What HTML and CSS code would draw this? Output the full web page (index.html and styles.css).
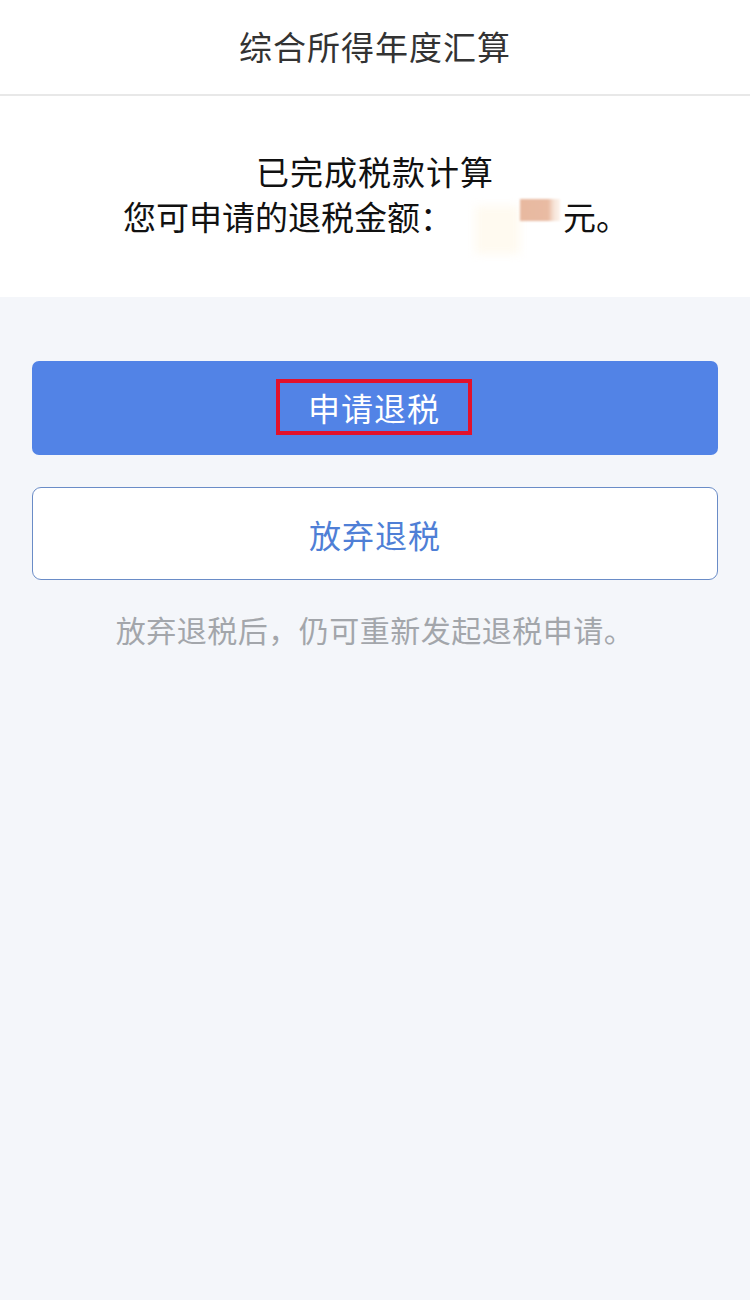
FILE: index.html
```html
<!DOCTYPE html>
<html lang="zh-CN">
<head>
<meta charset="utf-8">
<title>综合所得年度汇算</title>
<link rel="stylesheet" href="styles.css">
</head>
<body>
<div class="page">
  <header class="topbar">
    <h1 class="title">综合所得年度汇算</h1>
  </header>
  <section class="result">
    <p class="line line-1">已完成税款计算</p>
    <p class="line line-2">您可申请的退税金额：<span class="amount"><span class="blur-a"></span><span class="blur-b"></span></span>元。</p>
  </section>
  <main class="actions">
    <button class="btn btn-primary"><span class="highlight">申请退税</span></button>
    <button class="btn btn-outline">放弃退税</button>
    <p class="hint">放弃退税后，仍可重新发起退税申请。</p>
  </main>
</div>
</body>
</html>
```

FILE: styles.css
```css
* { box-sizing: border-box; }
html, body {
  margin: 0;
  padding: 0;
  background: #f4f6fa;
}
body {
  font-family: "Noto Sans CJK SC", "Noto Sans", sans-serif;
  width: 750px;
  min-height: 1300px;
}
.page {
  display: flex;
  flex-direction: column;
  min-height: 1300px;
}
.topbar {
  background: #ffffff;
  height: 96px;
  border-bottom: 2px solid #e8e8e8;
  display: flex;
  align-items: center;
  justify-content: center;
}
.title {
  margin: 0;
  margin-top: -2px;
  font-size: 33px;
  font-weight: 400;
  color: #333333;
  letter-spacing: 1px;
}
.result {
  background: #ffffff;
  height: 201px;
  display: flex;
  flex-direction: column;
  align-items: center;
  padding-top: 53px;
}
.line {
  margin: 0;
  color: #111111;
  font-size: 33px;
  line-height: 45px;
  white-space: nowrap;
}
.line-1 { letter-spacing: 1px; }
.line-2 {
  display: flex;
  align-items: center;
  height: 45px;
  margin-left: 2px;
}
.amount {
  display: inline-flex;
  align-items: flex-start;
  width: 110px;
  height: 45px;
  padding-left: 22px;
}
.blur-a {
  width: 45px;
  height: 48px;
  margin-top: 12px;
  background: #fffaf0;
  filter: blur(5px);
}
.blur-b {
  width: 40px;
  height: 22px;
  margin-top: 5px;
  background: linear-gradient(to right, #e8b9a0 0%, #e9bba3 70%, #f7e4d8 85%, #fdf3ec 100%);
  filter: blur(1.2px);
}
.actions {
  flex: 1;
  padding: 64px 32px 0;
  display: flex;
  flex-direction: column;
  align-items: stretch;
}
.btn {
  font-family: inherit;
  height: 94px;
  font-size: 32px;
  display: flex;
  align-items: center;
  justify-content: center;
  cursor: pointer;
  padding: 0;
}
.btn-primary {
  background: #5283e6;
  color: #ffffff;
  border: none;
  border-radius: 7px;
}
.highlight {
  display: inline-flex;
  align-items: center;
  justify-content: center;
  width: 196px;
  height: 56px;
  border: 4px solid #e2112c;
  margin-left: -2px;
  margin-top: -3px;
  letter-spacing: 1px;
}
.btn-outline {
  margin-top: 32px;
  height: 93px;
  background: #ffffff;
  color: #4f7fd6;
  border: 1.5px solid #6a8cc7;
  border-radius: 9px;
  letter-spacing: 1px;
}
.hint {
  margin: 27px 0 0;
  text-align: center;
  font-size: 30px;
  color: #a3a6ab;
  letter-spacing: 0.5px;
}
```
